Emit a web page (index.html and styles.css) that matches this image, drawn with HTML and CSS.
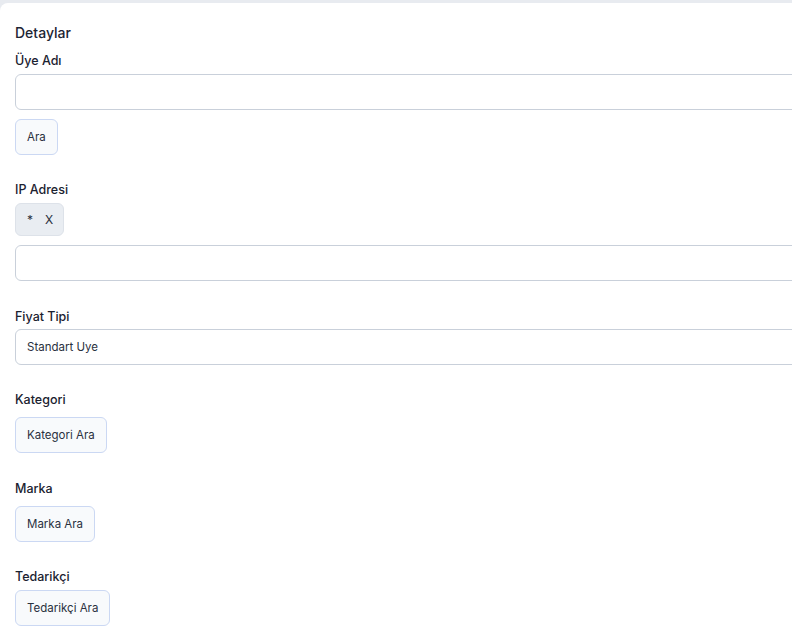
FILE: index.html
```html
<!DOCTYPE html>
<html lang="tr">
<head>
<meta charset="utf-8">
<link rel="stylesheet" href="styles.css">
</head>
<body>
<div class="card">
  <h2 class="title">Detaylar</h2>

  <div class="group g-uye">
    <label class="label">Üye Adı</label>
    <input class="input" type="text">
    <button class="btn btn-after-input">Ara</button>
  </div>

  <div class="group g-ip">
    <label class="label">IP Adresi</label>
    <div class="chip"><span>*</span><span class="chip-x">X</span></div>
    <input class="input input-after-chip" type="text">
  </div>

  <div class="group g-fiyat">
    <label class="label">Fiyat Tipi</label>
    <div class="select">Standart Uye</div>
  </div>

  <div class="group g-kat">
    <label class="label">Kategori</label>
    <button class="btn">Kategori Ara</button>
  </div>

  <div class="group g-marka">
    <label class="label">Marka</label>
    <button class="btn">Marka Ara</button>
  </div>

  <div class="group g-ted">
    <label class="label">Tedarikçi</label>
    <button class="btn btn-tight">Tedarikçi Ara</button>
  </div>
</div>
</body>
</html>
```
FILE: styles.css
```css
html, body {
  margin: 0;
  padding: 0;
}
body {
  background: #e8ebf0;
  font-family: Inter, "Noto Sans", sans-serif;
  color: #1d2433;
  width: 792px;
  height: 642px;
  overflow: hidden;
}
.card {
  margin-top: 3px;
  background: #ffffff;
  border-top-left-radius: 8px;
  padding: 20px 0 0 15px;
  width: 792px;
  height: 639px;
  box-sizing: border-box;
  overflow: hidden;
}
.title {
  margin: 0;
  font-size: 14px;
  font-weight: 500;
  line-height: 20px;
  height: 20px;
}
.group {
  display: flex;
  flex-direction: column;
  align-items: flex-start;
}
.label {
  display: block;
  box-sizing: border-box;
  padding-top: 1px;
  font-size: 12.5px;
  font-weight: 500;
  line-height: 20px;
  height: 20px;
  color: #1b2230;
}
.g-uye { margin-top: 7px; }
.g-ip { margin-top: 24px; }
.g-fiyat { margin-top: 25px; }
.g-kat { margin-top: 24px; }
.g-marka { margin-top: 25px; }
.g-ted { margin-top: 24px; }

.input {
  display: block;
  margin-top: 4px;
  width: 790px;
  height: 36px;
  box-sizing: border-box;
  border: 1px solid #c9d0da;
  border-radius: 6px;
  background: #fff;
  outline: none;
  font: inherit;
}
.input-after-chip { margin-top: 9px; }
.btn {
  margin-top: 8px;
  height: 36px;
  box-sizing: border-box;
  padding: 0 11px;
  border: 1px solid #cbd8f3;
  border-radius: 6px;
  background: #f8fafc;
  font-family: inherit;
  font-size: 11.5px;
  color: #2a3140;
}
.btn-after-input { margin-top: 9px; }
.btn-tight { margin-top: 4px; }
.chip {
  margin-top: 4px;
  height: 33px;
  box-sizing: border-box;
  display: flex;
  align-items: center;
  padding: 0 10px 0 11px;
  gap: 12px;
  background: #e9edf2;
  border: 1px solid #dde2e9;
  border-radius: 6px;
  font-size: 12px;
  color: #2a3140;
}
.select {
  margin-top: 3px;
  width: 790px;
  height: 36px;
  box-sizing: border-box;
  border: 1px solid #c9d0da;
  border-radius: 6px;
  display: flex;
  align-items: center;
  padding-left: 11px;
  font-size: 11.5px;
  color: #2a3140;
}
```
